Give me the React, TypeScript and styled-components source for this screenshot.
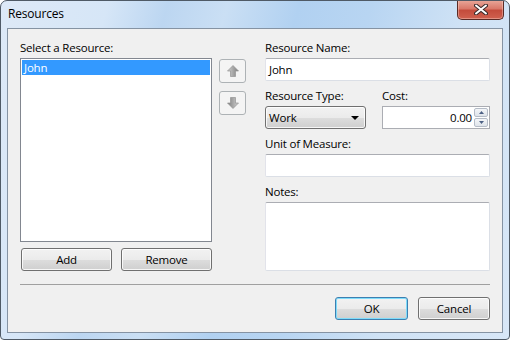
import React from "react";
import styled, { createGlobalStyle, css } from "styled-components";

const GlobalStyle = createGlobalStyle`
  html, body {
    margin: 0;
    padding: 0;
    background: #ffffff;
  }
  body {
    font-family: "Open Sans", "Noto Sans", sans-serif;
    font-size: 11.5px;
    letter-spacing: -0.2px;
    color: #000000;
  }
  * {
    box-sizing: border-box;
  }
`;

const App = () => {
  return (
    <>
      <GlobalStyle />
      <Window>
        <TitleBar>
          <Title>Resources</Title>
          <CloseButton>
            <svg width="14" height="11" viewBox="0 0 14 11">
              <path
                d="M2 1.5 L12 9.5 M12 1.5 L2 9.5"
                stroke="#3a2a2a"
                strokeWidth="4"
                strokeLinecap="round"
              />
              <path
                d="M2 1.5 L12 9.5 M12 1.5 L2 9.5"
                stroke="#ffffff"
                strokeWidth="2"
                strokeLinecap="round"
              />
            </svg>
          </CloseButton>
        </TitleBar>
        <Client>
          <Main>
            <LeftColumn>
              <Label>Select a Resource:</Label>
              <ListBox>
                <ListItem $selected>John</ListItem>
              </ListBox>
              <ButtonRow>
                <Button>Add</Button>
                <Button>Remove</Button>
              </ButtonRow>
            </LeftColumn>
            <MoveColumn>
              <MoveButton>
                <Arrow direction="up" />
              </MoveButton>
              <MoveButton>
                <Arrow direction="down" />
              </MoveButton>
            </MoveColumn>
            <RightColumn>
              <Field>
                <Label>Resource Name:</Label>
                <TextBox>John</TextBox>
              </Field>
              <FieldRow>
                <Field>
                  <Label>Resource Type:</Label>
                  <Select>
                    <span>Work</span>
                    <svg width="8" height="4" viewBox="0 0 8 4">
                      <path d="M0 0 H8 L4 4 Z" fill="#000000" />
                    </svg>
                  </Select>
                </Field>
                <Field $grow>
                  <Label>Cost:</Label>
                  <SpinBox>
                    <SpinValue>0.00</SpinValue>
                    <SpinButtons>
                      <SpinButton>
                        <svg width="5" height="3" viewBox="0 0 5 3">
                          <path d="M0 3 L2.5 0 L5 3 Z" fill="#4d6185" />
                        </svg>
                      </SpinButton>
                      <SpinButton>
                        <svg width="5" height="3" viewBox="0 0 5 3">
                          <path d="M0 0 H5 L2.5 3 Z" fill="#4d6185" />
                        </svg>
                      </SpinButton>
                    </SpinButtons>
                  </SpinBox>
                </Field>
              </FieldRow>
              <Field>
                <Label>Unit of Measure:</Label>
                <TextBox />
              </Field>
              <Field $grow>
                <Label>Notes:</Label>
                <TextBox $multiline />
              </Field>
            </RightColumn>
          </Main>
          <Separator />
          <Footer>
            <Button $default $width={73}>
              OK
            </Button>
            <Button $width={72}>Cancel</Button>
          </Footer>
        </Client>
      </Window>
    </>
  );
};

const Arrow = ({ direction }: { direction: "up" | "down" }) => (
  <svg
    width="12"
    height="12"
    viewBox="0 0 12 12"
    style={{ transform: direction === "down" ? "rotate(180deg)" : undefined }}
  >
    <defs>
      <linearGradient id={`arrow-${direction}`} x1="0" y1="0" x2="1" y2="0">
        <stop offset="0" stopColor="#d0d0d0" />
        <stop offset="0.5" stopColor="#a8a8a8" />
        <stop offset="1" stopColor="#7e7e7e" />
      </linearGradient>
    </defs>
    <path
      d="M6 0.5 L11.5 6 H8.5 V11.5 H3.5 V6 H0.5 Z"
      fill={`url(#arrow-${direction})`}
      stroke="#949494"
      strokeWidth="0.7"
      strokeLinejoin="round"
    />
  </svg>
);

const Window = styled.div`
  width: 510px;
  height: 340px;
  display: flex;
  flex-direction: column;
  border: 1px solid #4f5a66;
  border-radius: 7px 7px 4px 4px;
  padding: 0 6px 6px 6px;
  background: linear-gradient(
    105deg,
    #dde9f7 0%,
    #d6e6f7 18%,
    #bcd6f1 28%,
    #cadff4 38%,
    #b1d1f1 50%,
    #b8d5f2 62%,
    #cfe2f5 78%,
    #d8e7f7 100%
  );
  overflow: hidden;
`;

const TitleBar = styled.div`
  height: 27px;
  display: flex;
  justify-content: space-between;
  align-items: flex-start;
  padding-left: 1px;
`;

const Title = styled.div`
  padding-top: 5px;
  line-height: 16px;
  font-size: 12px;
  letter-spacing: -0.2px;
  color: #000000;
`;

const CloseButton = styled.div`
  width: 47px;
  height: 20px;
  margin-top: -1px;
  margin-right: -1px;
  display: flex;
  align-items: center;
  justify-content: center;
  border: 1px solid #5a2b26;
  border-top: none;
  border-radius: 0 0 5px 5px;
  background: linear-gradient(
    to bottom,
    #e9a99b 0%,
    #d9796a 45%,
    #c44c3c 55%,
    #d0614f 100%
  );
  box-shadow: inset 0 0 0 1px rgba(255, 220, 210, 0.4);
`;

const Client = styled.div`
  flex: 1;
  display: flex;
  flex-direction: column;
  border: 1px solid #8593a3;
  background: #f0f0f0;
  padding: 11px 12px 0 12px;
`;

const Main = styled.div`
  display: flex;
  height: 231px;
`;

const LeftColumn = styled.div`
  width: 192px;
  display: flex;
  flex-direction: column;
`;

const Label = styled.div`
  line-height: 16px;
  height: 16px;
  margin-bottom: 2px;
  white-space: nowrap;
`;

const ListBox = styled.div`
  flex: 1;
  border: 1px solid #828790;
  background: #ffffff;
  padding: 1px;
`;

const ListItem = styled.div<{ $selected?: boolean }>`
  height: 15px;
  line-height: 15px;
  padding-left: 2px;
  ${(p) =>
    p.$selected &&
    css`
      background: #3399ff;
      color: #ffffff;
    `}
`;

const ButtonRow = styled.div`
  display: flex;
  justify-content: space-between;
  margin-top: 6px;
  padding-left: 1px;
`;

const Button = styled.div<{ $default?: boolean; $width?: number }>`
  width: ${(p) => p.$width ?? 91}px;
  height: 23px;
  display: flex;
  align-items: center;
  justify-content: center;
  border: 1px solid ${(p) => (p.$default ? "#3c7fb1" : "#707070")};
  border-radius: 3px;
  background: linear-gradient(
    to bottom,
    #f2f2f2 0%,
    #ebebeb 50%,
    #dddddd 51%,
    #cfcfcf 100%
  );
  box-shadow: inset 0 0 0 1px
    ${(p) => (p.$default ? "#7fdcfa" : "rgba(255, 255, 255, 0.8)")};
  color: #000000;
`;

const MoveColumn = styled.div`
  width: 27px;
  margin: 0 19px 0 7px;
  padding-top: 19px;
  display: flex;
  flex-direction: column;
  gap: 8px;
`;

const MoveButton = styled.div`
  height: 24px;
  display: flex;
  align-items: center;
  justify-content: center;
  border: 1px solid #adb2b5;
  border-radius: 3px;
  background: #f4f4f4;
`;

const RightColumn = styled.div`
  width: 225px;
  display: flex;
  flex-direction: column;
  gap: 7px;
`;

const Field = styled.div<{ $grow?: boolean }>`
  display: flex;
  flex-direction: column;
  ${(p) =>
    p.$grow &&
    css`
      flex: 1;
    `}
`;

const FieldRow = styled.div`
  display: flex;
  gap: 16px;
`;

const TextBox = styled.div<{ $multiline?: boolean }>`
  height: ${(p) => (p.$multiline ? "auto" : "23px")};
  flex: ${(p) => (p.$multiline ? 1 : "none")};
  line-height: 21px;
  padding: 0 3px;
  border: 1px solid #dbdfe6;
  border-top-color: #abadb3;
  border-left-color: #e2e3ea;
  border-radius: 2px;
  background: #ffffff;
`;

const Select = styled.div`
  width: 101px;
  height: 23px;
  display: flex;
  align-items: center;
  justify-content: space-between;
  padding: 0 6px 0 3px;
  border: 1px solid #707070;
  border-radius: 3px;
  background: linear-gradient(
    to bottom,
    #f2f2f2 0%,
    #ebebeb 50%,
    #dddddd 51%,
    #cfcfcf 100%
  );
  box-shadow: inset 0 0 0 1px rgba(255, 255, 255, 0.8);
`;

const SpinBox = styled.div`
  height: 23px;
  display: flex;
  align-items: stretch;
  padding: 1px;
  border: 1px solid #abadb3;
  background: #ffffff;
`;

const SpinValue = styled.div`
  flex: 1;
  text-align: right;
  line-height: 19px;
  padding-right: 2px;
`;

const SpinButtons = styled.div`
  width: 14px;
  display: flex;
  flex-direction: column;
  gap: 1px;
`;

const SpinButton = styled.div`
  flex: 1;
  display: flex;
  align-items: center;
  justify-content: center;
  border: 1px solid #b5bcc7;
  border-radius: 2px;
  background: linear-gradient(to bottom, #f4f6f9, #dfe4ea);
`;

const Separator = styled.div`
  height: 1px;
  margin-top: 13px;
  background: #a0a0a0;
`;

const Footer = styled.div`
  display: flex;
  justify-content: flex-end;
  gap: 10px;
  margin-top: 12px;
`;

export default App;
